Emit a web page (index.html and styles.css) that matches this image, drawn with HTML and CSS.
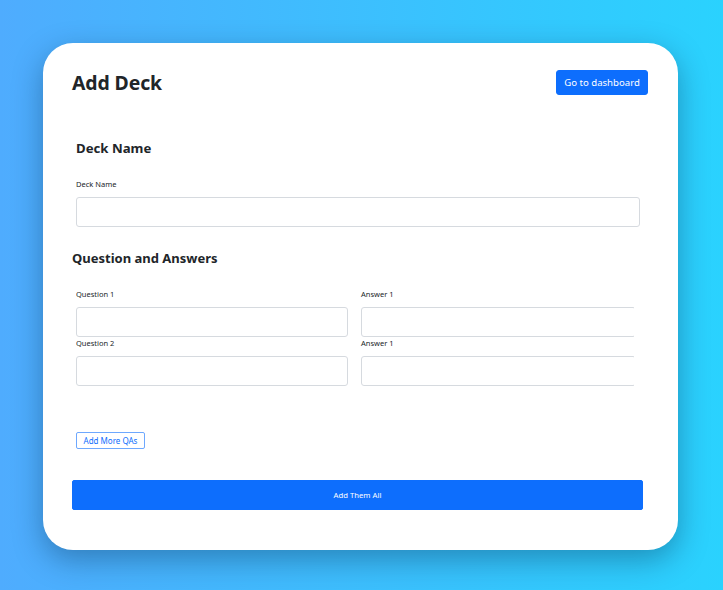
FILE: index.html
```html
<!DOCTYPE html>
<html lang="en">
<head>
<meta charset="utf-8">
<title>Add Deck</title>
<link rel="stylesheet" href="styles.css">
</head>
<body>
<main class="card">
  <header class="card-header">
    <h1 class="title">Add Deck</h1>
    <button class="btn btn-primary btn-dash" type="button">Go to dashboard</button>
  </header>

  <section class="deck-section">
    <h2 class="section-title">Deck Name</h2>
    <label class="field-label" for="deck">Deck Name</label>
    <input class="field" id="deck" type="text">
  </section>

  <section class="qa-section">
    <h2 class="section-title qa-title">Question and Answers</h2>
    <div class="qa-grid">
      <div class="qa-cell">
        <label class="field-label">Question 1</label>
        <input class="field" type="text">
      </div>
      <div class="qa-cell answer">
        <label class="field-label">Answer 1</label>
        <input class="field" type="text">
      </div>
      <div class="qa-cell">
        <label class="field-label">Question 2</label>
        <input class="field" type="text">
      </div>
      <div class="qa-cell answer">
        <label class="field-label">Answer 1</label>
        <input class="field" type="text">
      </div>
    </div>
    <button class="btn btn-outline" type="button">Add More QAs</button>
  </section>

  <button class="btn btn-primary btn-submit" type="button">Add Them All</button>
</main>
</body>
</html>
```

FILE: styles.css
```css
* { box-sizing: border-box; }

html, body {
  margin: 0;
  height: 590px;
}

body {
  font-family: "Noto Sans", "Open Sans", sans-serif;
  color: #212529;
  background: linear-gradient(90deg, #4facfe 0%, #2ad2fe 100%);
  padding: 43px 45px 40px 43px;
  display: flex;
  overflow: hidden;
}

.card {
  flex: 1;
  height: 507px;
  background: #fff;
  border-radius: 30px;
  box-shadow: 0 10px 30px rgba(0, 30, 60, 0.35);
  padding: 27px 30px 0 29px;
  display: flex;
  flex-direction: column;
}

.card-header {
  display: flex;
  justify-content: space-between;
  align-items: center;
  height: 25px;
}

.title {
  margin: 0;
  font-size: 19.4px;
  font-weight: 700;
  line-height: 25px;
  letter-spacing: -0.1px;
}

.btn {
  font-family: "Noto Sans", "Open Sans", sans-serif;
  cursor: pointer;
}

.btn-primary {
  background: #0d6efd;
  color: #fff;
  border: 1px solid #0d6efd;
}

.btn-dash {
  height: 25px;
  width: 92px;
  padding: 0;
  font-size: 9.6px;
  border-radius: 3px;
}

.deck-section {
  margin-top: 45px;
  padding: 0 8px 0 4px;
}

.section-title {
  margin: 0;
  font-size: 13.2px;
  font-weight: 700;
  line-height: 16px;
}

.qa-title {
  font-size: 13px;
}

.field-label {
  display: block;
  font-size: 7.5px;
  line-height: 10px;
  margin-top: 23px;
  margin-bottom: 8px;
}

.field {
  display: block;
  width: 100%;
  height: 30px;
  border: 1px solid #d6dadf;
  border-radius: 3px;
  background: #fff;
  padding: 0 8px;
  font: inherit;
}

.qa-section {
  margin-top: 23px;
  padding-right: 14px;
}

.qa-grid {
  display: grid;
  grid-template-columns: 272px 273px;
  column-gap: 13px;
  margin-left: 4px;
  overflow: hidden;
}

.qa-cell .field-label {
  margin-top: 23px;
}

.qa-cell:nth-child(n+3) .field-label {
  margin-top: 1px;
}

.answer .field {
  width: calc(100% + 2px);
}

.btn-outline {
  display: block;
  margin: 46px 0 0 4px;
  height: 17px;
  width: 69px;
  padding: 0;
  background: #fff;
  color: #0d6efd;
  border: 1px solid #6ea8fe;
  border-radius: 2px;
  font-size: 8px;
}

.btn-submit {
  margin-top: 31px;
  height: 30px;
  width: 571px;
  border-radius: 2px;
  font-size: 7.7px;
}
```
